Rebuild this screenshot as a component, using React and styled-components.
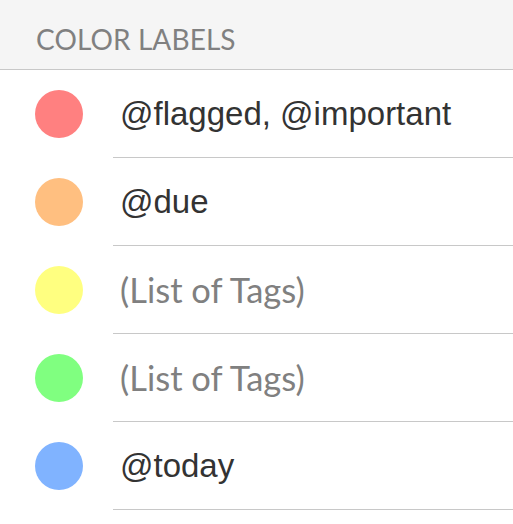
import React from "react";
import styled, { createGlobalStyle } from "styled-components";

const Global = createGlobalStyle`
  html, body { margin: 0; padding: 0; background: #fff; }
  body { width: 513px; overflow: hidden; }
`;

const Panel = styled.div`
  width: 513px;
  background: #fff;
`;

const Header = styled.div`
  height: 70px;
  box-sizing: border-box;
  background: #f5f5f5;
  border-bottom: 1px solid #c8c8c8;
  display: flex;
  align-items: center;
  padding: 8px 0 0 36px;
  font-family: "Lato", "Open Sans", sans-serif;
  font-size: 28px;
  color: #808080;
  letter-spacing: 0.1px;
`;

const List = styled.ul`
  list-style: none;
  margin: 0;
  padding: 0;
`;

const Row = styled.li`
  display: flex;
  align-items: center;
  height: 88px;
  box-sizing: border-box;
`;

const Dot = styled.span`
  flex: none;
  width: 48px;
  height: 48px;
  border-radius: 50%;
  background: ${(p) => p.$color};
  margin: -1px 30px 0 35px;
`;

const Label = styled.div`
  flex: 1;
  align-self: stretch;
  display: flex;
  align-items: center;
  padding-left: 7px;
  border-bottom: 1px solid #c8c8c8;
  font-family: ${(p) =>
    p.$placeholder ? `"Lato", "Open Sans", sans-serif` : `"Liberation Sans", Arial, sans-serif`};
  font-size: ${(p) => (p.$placeholder ? "34.5px" : "33px")};
  color: ${(p) => (p.$placeholder ? "#808080" : "#333333")};
`;

const rows = [
  { color: "#ff8080", text: "@flagged, @important" },
  { color: "#ffbf80", text: "@due" },
  { color: "#ffff80", text: "(List of Tags)", placeholder: true },
  { color: "#80ff80", text: "(List of Tags)", placeholder: true },
  { color: "#80b3ff", text: "@today" },
];

export default function App() {
  return (
    <Panel>
      <Global />
      <Header>COLOR LABELS</Header>
      <List>
        {rows.map((r, i) => (
          <Row key={i}>
            <Dot $color={r.color} />
            <Label $placeholder={r.placeholder}>{r.text}</Label>
          </Row>
        ))}
      </List>
    </Panel>
  );
}
